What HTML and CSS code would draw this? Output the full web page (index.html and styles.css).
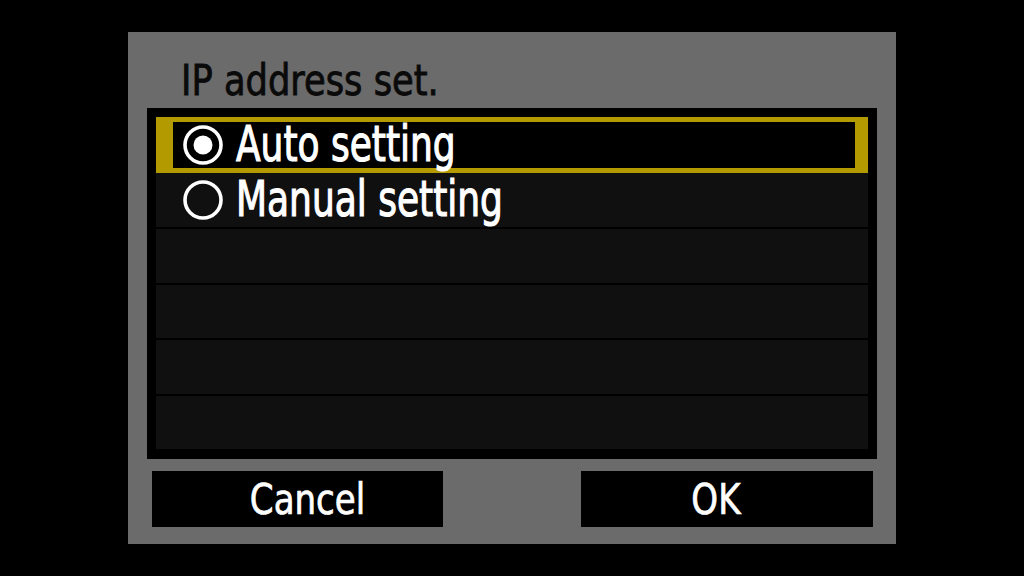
FILE: index.html
```html
<!DOCTYPE html>
<html lang="en">
<head>
<meta charset="utf-8">
<title>IP address set.</title>
<link rel="stylesheet" href="styles.css">
</head>
<body>
<div class="screen">
  <div class="dialog">
    <div class="title"><span class="title-text">IP address set.</span></div>
    <div class="list">
      <div class="row row-first selected">
        <svg class="radio" viewBox="0 0 40 40" width="40" height="40"><circle cx="20" cy="20" r="18" fill="none" stroke="#fff" stroke-width="3.6"/><circle cx="20" cy="20" r="9.5" fill="#fff"/></svg>
        <span class="label">Auto setting</span>
      </div>
      <div class="row row-second">
        <svg class="radio" viewBox="0 0 40 40" width="40" height="40"><circle cx="20" cy="20" r="18" fill="none" stroke="#fff" stroke-width="3.6"/></svg>
        <span class="label">Manual setting</span>
      </div>
      <div class="row"></div>
      <div class="row"></div>
      <div class="row"></div>
      <div class="row"></div>
    </div>
    <div class="buttons">
      <div class="btn btn-cancel"><span class="btn-text">Cancel</span></div>
      <div class="btn btn-ok"><span class="btn-text">OK</span></div>
    </div>
  </div>
</div>
</body>
</html>
```

FILE: styles.css
```css
html, body {
  margin: 0;
  padding: 0;
  background: #000;
}
body {
  width: 1024px;
  height: 576px;
  overflow: hidden;
  font-family: "DejaVu Sans Condensed", "DejaVu Sans", sans-serif;
}
.screen {
  width: 1024px;
  height: 576px;
  padding: 32px 128px;
  box-sizing: border-box;
}
.dialog {
  width: 768px;
  height: 512px;
  background: #6b6b6b;
  display: flex;
  flex-direction: column;
}
.title {
  height: 76px;
  box-sizing: border-box;
  padding: 21px 0 0 53px;
  font-size: 42px;
  line-height: 55px;
  color: #0a0a0a;
}
.title-text {
  display: inline-block;
  transform: scaleX(0.934);
  transform-origin: left center;
  white-space: nowrap;
  -webkit-text-stroke: 0.8px #0a0a0a;
}
.list {
  margin: 0 19px;
  height: 351px;
  box-sizing: border-box;
  background: #000;
  padding: 9px 9px 10px 9px;
  display: flex;
  flex-direction: column;
}
.row {
  background: #101010;
  height: 53.5px;
  margin-top: 2px;
  box-sizing: border-box;
  display: flex;
  align-items: center;
  border-style: solid;
  border-color: transparent;
  border-width: 0 13px 0 17px;
}
.row-first {
  height: 56px;
  margin-top: 0;
  border-width: 5px 13px 5px 17px;
}
.row-second {
  height: 54px;
  margin-top: 0;
}
.row.selected {
  background: #000;
  border-color: #b39a00;
}
.radio {
  display: block;
  margin-left: 10px;
  flex: none;
}
.label {
  display: inline-block;
  margin-left: 13px;
  font-size: 49px;
  line-height: 1.16;
  color: #fff;
  white-space: nowrap;
  transform: scaleX(0.816);
  transform-origin: left center;
  -webkit-text-stroke: 1.1px #fff;
}
.buttons {
  margin-top: 12px;
  height: 56px;
  padding: 0 23px 0 24px;
  display: flex;
  justify-content: space-between;
}
.btn {
  background: #000;
  height: 56px;
  box-sizing: border-box;
  display: flex;
  align-items: center;
  justify-content: center;
  color: #fff;
  font-size: 43px;
}
.btn-text {
  display: inline-block;
  transform: scaleX(0.88);
  transform-origin: center center;
  white-space: nowrap;
  -webkit-text-stroke: 0.7px #fff;
}
.btn-cancel {
  width: 291px;
  padding-left: 20px;
}
.btn-ok {
  width: 292px;
  padding-right: 22px;
}
```
